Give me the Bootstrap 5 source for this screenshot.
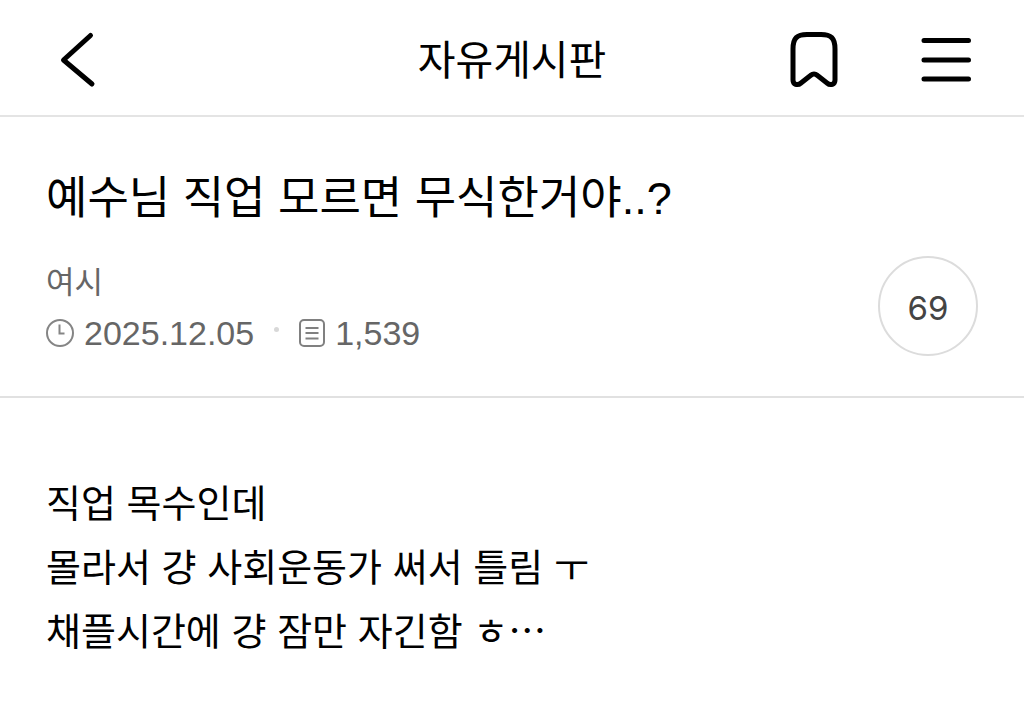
<!DOCTYPE html>
<html lang="ko">
<head>
<meta charset="utf-8">
<meta name="viewport" content="width=device-width, initial-scale=1">
<title>자유게시판</title>
<link href="https://cdn.jsdelivr.net/npm/bootstrap@5.3.0/dist/css/bootstrap.min.css" rel="stylesheet">
<style>
  body { font-family: Inter, "Noto Sans CJK KR", sans-serif; color: #000; background: #fff; }
  .topbar { padding: 28px 46px 27px; border-bottom: 2px solid #e4e4e4; }
  .side { flex: 1 1 0; }
  .board-name { font-size: 41px; line-height: 56px; font-weight: 400; padding-top: 4px; }
  .icon-button { padding: 0; border: 0; background: none; color: #000; line-height: 1; }
  .icon-button svg, .meta-row svg { display: block; flex: none; }
  .tools { gap: 68px; }
  .post-head { padding: 50px 46px 38px; border-bottom: 2px solid #e1e1e1; }
  .post-title { font-family: "Liberation Sans", "Noto Sans CJK KR", sans-serif; font-size: 45px; line-height: 64px; font-weight: 400; margin-bottom: 25px; }
  .author { display: block; font-size: 31px; line-height: 52px; color: #666; text-decoration: none; }
  .meta-row { font-family: "Liberation Sans", sans-serif; font-size: 34px; line-height: 50px; color: #666; }
  .meta-item { gap: 10px; }
  .separator { width: 5px; height: 5px; margin: 0 20px 8px; border-radius: 50%; background: #d8d8d8; }
  .comment-count { width: 100px; height: 100px; padding: 4px 0 0; border: 2px solid #dcdcdc; border-radius: 50%; background: #fff; font-size: 33px; line-height: 40px; color: #444; }
  .post-body { padding: 73px 46px; font-size: 38px; line-height: 64px; }
  .dots { font-family: "Noto Sans CJK KR", sans-serif; line-height: 1; }
</style>
</head>
<body>
<header class="topbar d-flex align-items-center">
  <div class="side d-flex">
    <button class="icon-button" type="button" aria-label="뒤로">
      <svg width="64" height="60" viewBox="0 0 64 60" fill="none" stroke="currentColor" stroke-width="5" stroke-linecap="round" stroke-linejoin="round"><path d="M44.500 7.500 17.500 32 46 56"/></svg>
    </button>
  </div>
  <h1 class="board-name mb-0">자유게시판</h1>
  <div class="side tools d-flex justify-content-end">
    <button class="icon-button" type="button" aria-label="북마크">
      <svg width="64" height="60" viewBox="0 0 64 60" fill="none" stroke="currentColor" stroke-width="5" stroke-linejoin="round"><path d="M11 21C11 10 15 6.500 25 6.500H39C49 6.500 53 10 53 21V52C53 56.500 48.500 58 45 55L35.500 47.500Q32 44.500 28.500 47.500L19 55C15.500 58 11 56.500 11 52Z"/></svg>
    </button>
    <button class="icon-button" type="button" aria-label="메뉴">
      <svg width="64" height="60" viewBox="0 0 64 60" fill="none" stroke="currentColor" stroke-width="5" stroke-linecap="round"><path d="M10 12.500H54.500M10 32H54.500M10 51H54.500"/></svg>
    </button>
  </div>
</header>
<main>
  <section class="post-head">
    <h2 class="post-title">예수님 직업 모르면 무식한거야..?</h2>
    <div class="d-flex justify-content-between align-items-start">
      <div>
        <a class="author" href="#">여시</a>
        <div class="meta-row d-flex align-items-center">
          <span class="meta-item d-flex align-items-center">
            <svg width="28" height="28" viewBox="0 0 28 28" fill="none" stroke="#858585" stroke-width="2" aria-hidden="true"><circle cx="14" cy="14" r="13"/><path d="M13.500 5.500V14.500H18.500"/></svg>
            <time datetime="2025-12-05">2025.12.05</time>
          </span>
          <span class="separator"></span>
          <span class="meta-item d-flex align-items-center">
            <svg width="26" height="28" viewBox="0 0 26 28" fill="none" stroke="#808080" stroke-width="2" aria-hidden="true"><rect x="1" y="1" width="24" height="26" rx="4"/><path d="M6.500 9H19.500M6.500 14H19.500M6.500 19.500H19.500"/></svg>
            <span>1,539</span>
          </span>
        </div>
      </div>
      <button class="comment-count" type="button" aria-label="댓글 69">69</button>
    </div>
  </section>
  <article class="post-body">
    <p class="m-0">직업 목수인데<br>몰라서 걍 사회운동가 써서 틀림 ㅜ<br>채플시간에 걍 잠만 자긴함 ㅎ<span class="dots">⋯</span></p>
  </article>
</main>
<script src="https://cdn.jsdelivr.net/npm/bootstrap@5.3.0/dist/js/bootstrap.bundle.min.js"></script>
</body>
</html>
